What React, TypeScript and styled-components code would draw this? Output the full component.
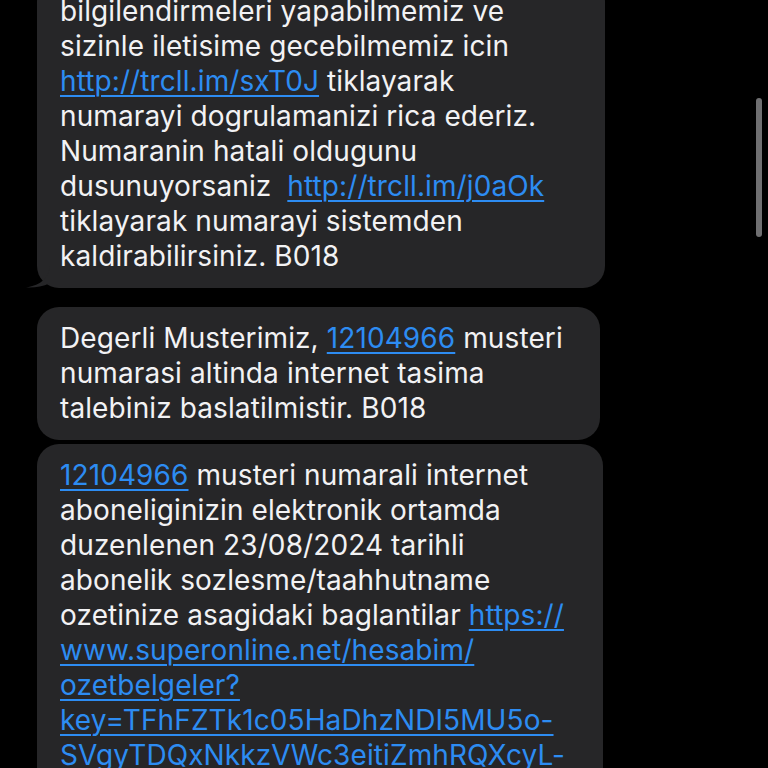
import React from "react";
import styled, { createGlobalStyle } from "styled-components";

const Global = createGlobalStyle`
  html, body { margin: 0; padding: 0; background: #000; }
  body { overflow: hidden; }
`;

const Screen = styled.div`
  position: relative;
  width: 768px;
  height: 768px;
  overflow: hidden;
  background: #000;
  font-family: Inter, "Noto Sans", sans-serif;
`;

const Thread = styled.div`
  display: flex;
  flex-direction: column;
  align-items: flex-start;
  padding-left: 37px;
  margin-top: -20px;
`;

const Bubble = styled.div<{ $w: number; $gap: number }>`
  position: relative;
  box-sizing: border-box;
  width: ${(p) => p.$w}px;
  margin-bottom: ${(p) => p.$gap}px;
  padding: 14px 22px 14px 23px;
  background: #262628;
  border-radius: 22px;
  color: #f2f2f4;
  font-size: 28px;
  line-height: 35px;
  letter-spacing: 0.1px;
  white-space: nowrap;
`;

const Link = styled.a`
  color: #2d8cf2;
  text-decoration: underline;
  text-decoration-thickness: 2px;
  text-underline-offset: 4px;
`;

const Tail = styled.svg`
  position: absolute;
  left: -11px;
  bottom: 0;
  width: 24px;
  height: 22px;
`;

const ScrollThumb = styled.div`
  position: absolute;
  right: 6px;
  top: 98px;
  width: 6px;
  height: 139px;
  border-radius: 3px;
  background: #6f6f71;
`;

export default function App() {
  return (
    <Screen>
      <Global />
      <Thread>
        <Bubble $w={568} $gap={19}>
          bilgilendirmeleri yapabilmemiz ve
          <br />
          sizinle iletisime gecebilmemiz icin
          <br />
          <Link>http://trcll.im/sxT0J</Link> tiklayarak
          <br />
          numarayi dogrulamanizi rica ederiz.
          <br />
          Numaranin hatali oldugunu
          <br />
          dusunuyorsaniz{"\u00a0 "}<Link>http://trcll.im/j0aOk</Link>
          <br />
          tiklayarak numarayi sistemden
          <br />
          kaldirabilirsiniz. B018
          <Tail viewBox="0 0 24 22">
            <path d="M24 0 C22 12 16 19 0 21.5 C8 22 16 21 24 17 Z" fill="#262628" />
          </Tail>
        </Bubble>
        <Bubble $w={563} $gap={4}>
          Degerli Musterimiz, <Link>12104966</Link> musteri
          <br />
          numarasi altinda internet tasima
          <br />
          talebiniz baslatilmistir. B018
        </Bubble>
        <Bubble $w={566} $gap={0}>
          <Link>12104966</Link> musteri numarali internet
          <br />
          aboneliginizin elektronik ortamda
          <br />
          duzenlenen 23/08/2024 tarihli
          <br />
          abonelik sozlesme/taahhutname
          <br />
          ozetinize asagidaki baglantilar{" "}
          <Link>
            https://
            <br />
            www.superonline.net/hesabim/
            <br />
            ozetbelgeler?
            <br />
            key=TFhFZTk1c05HaDhzNDI5MU5o-
            <br />
            SVgyTDQxNkkzVWc3eitiZmhRQXcyL-
            <br />
            RmZ1bHVlQ2xWZz09
          </Link>
        </Bubble>
      </Thread>
      <ScrollThumb />
    </Screen>
  );
}
